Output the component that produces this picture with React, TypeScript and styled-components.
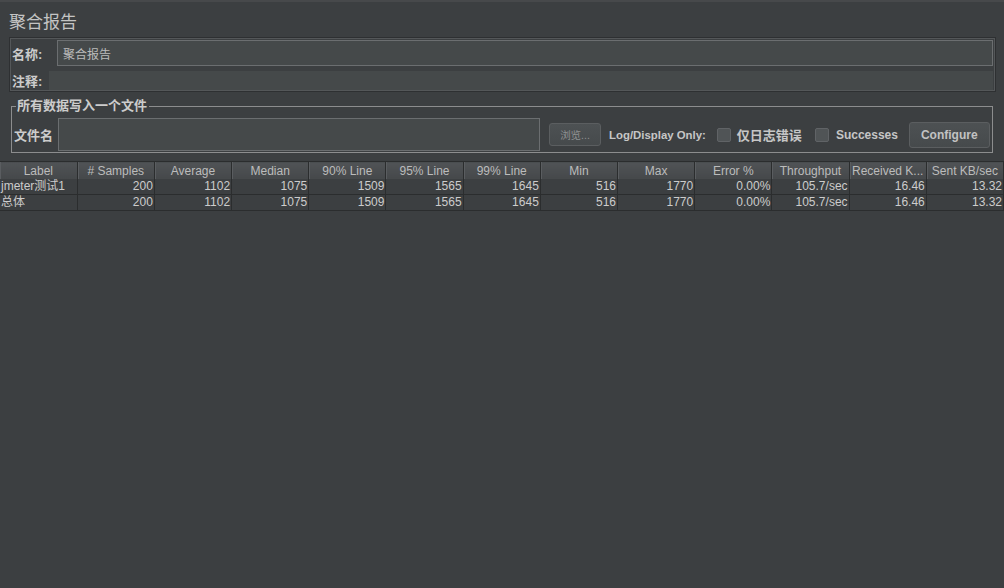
import styled, { createGlobalStyle } from 'styled-components';

const GlobalStyle = createGlobalStyle`
  html, body {
    margin: 0;
    padding: 0;
    background: #3c3f41;
  }
  body {
    font-family: "Liberation Sans", "Noto Sans CJK SC", sans-serif;
    color: #bbbbbb;
  }
`;

const Page = styled.div`
  width: 1004px;
  height: 588px;
  overflow: hidden;
  box-sizing: border-box;
  border-top: 2px solid #47494b;
  background: #3c3f41;
  display: flex;
  flex-direction: column;
`;

const Title = styled.div`
  padding: 10px 0 0 9px;
  height: 25px;
  font-size: 17px;
  line-height: 22px;
  color: #c4c4c4;
`;

const NamePanel = styled.div`
  margin: 0 8px 0 9px;
  border: 1px solid #2e3032;
  box-shadow: inset 0 0 0 1px #545759;
  padding: 2px 2px 1px 1px;
  display: flex;
  flex-direction: column;
  gap: 5px;
`;

const FieldRow = styled.div`
  display: flex;
  align-items: center;
`;

const BoldLabel = styled.span<{ $w?: number }>`
  width: ${({ $w }) => ($w ? `${$w}px` : 'auto')};
  flex: none;
  font-size: 13px;
  font-weight: bold;
  color: #cccccc;
  padding-left: 1px;
`;

const TextField = styled.div<{ $h: number; $border?: boolean }>`
  flex: 1;
  height: ${({ $h }) => $h}px;
  box-sizing: border-box;
  background: #45494a;
  border: ${({ $border }) => ($border ? '1px solid #6b6e70' : 'none')};
  font-size: 12px;
  color: #bbbbbb;
  display: flex;
  align-items: center;
  padding-left: 5px;
`;

const FileSet = styled.fieldset`
  margin: 7px 11px 0 11px;
  padding: 0 0 1px 1px;
  border: 1px solid #8c8d8e;
  border-radius: 0;
`;

const Legend = styled.legend`
  margin-left: 3px;
  padding: 0 2px 0 1px;
  font-size: 13px;
  font-weight: bold;
  color: #cccccc;
  line-height: 14px;
`;

const FileRow = styled.div`
  display: flex;
  align-items: center;
  padding-top: 5px;
`;

const FileField = styled(TextField)`
  flex: none;
  width: 482px;
  margin-left: 5px;
`;

const Button = styled.button<{ $dim?: boolean }>`
  box-sizing: border-box;
  height: ${({ $dim }) => ($dim ? 23 : 26)}px;
  width: ${({ $dim }) => ($dim ? '52px' : 'auto')};
  padding: 0 ${({ $dim }) => ($dim ? 0 : 11)}px;
  background: linear-gradient(#4d5153, #464a4c);
  border: 1px solid #5b5e60;
  border-radius: 3px;
  font-family: "Liberation Sans", "Noto Sans CJK SC", sans-serif;
  font-size: ${({ $dim }) => ($dim ? 10.5 : 12)}px;
  font-weight: ${({ $dim }) => ($dim ? 'normal' : 'bold')};
  color: ${({ $dim }) => ($dim ? '#8f9192' : '#c2c2c2')};
`;

const OptionText = styled.span<{ $cjk?: boolean; $small?: boolean }>`
  font-size: ${({ $cjk, $small }) => ($cjk ? 13 : $small ? 11.4 : 12)}px;
  font-weight: bold;
  color: #c6c6c6;
`;

const Check = styled.span`
  width: 14px;
  height: 14px;
  box-sizing: border-box;
  background: #505456;
  border: 1px solid #606366;
  border-radius: 2px;
  flex: none;
`;

const Options = styled.div`
  display: flex;
  align-items: center;
  margin-left: 8px;
`;

const Table = styled.table`
  margin-top: 8px;
  width: 1004px;
  border-collapse: collapse;
  table-layout: fixed;
  border-top: 1px solid #2b2d2e;
  font-size: 12px;
`;

const HeadCell = styled.th`
  height: 17px;
  padding: 0;
  font-weight: normal;
  color: #bcbcbc;
  text-align: center;
  background: linear-gradient(#505356, #45484a);
  border-right: 1px solid #2b2d2e;
  box-shadow: inset 1px 0 0 #5a5d60;
  white-space: nowrap;
  overflow: hidden;
  text-overflow: ellipsis;
`;

const Cell = styled.td<{ $left?: boolean }>`
  height: 15px;
  padding: 0 1px 0 1px;
  color: #cccccc;
  text-align: ${({ $left }) => ($left ? 'left' : 'right')};
  border-right: 1px solid #2b2d2e;
  border-bottom: 1px solid #2b2d2e;
  white-space: nowrap;
  overflow: hidden;
  line-height: 15px;
`;

const headers = [
  'Label', '# Samples', 'Average', 'Median', '90% Line', '95% Line', '99% Line',
  'Min', 'Max', 'Error %', 'Throughput', 'Received K...', 'Sent KB/sec',
];

const stats = ['200', '1102', '1075', '1509', '1565', '1645', '516', '1770', '0.00%', '105.7/sec', '16.46', '13.32'];
const rows = [['jmeter测试1', ...stats], ['总体', ...stats]];

const App = () => {
  return (
    <>
      <GlobalStyle />
      <Page>
        <Title>聚合报告</Title>
        <NamePanel>
          <FieldRow>
            <BoldLabel $w={45}>名称:</BoldLabel>
            <TextField $h={26} $border>聚合报告</TextField>
          </FieldRow>
          <FieldRow>
            <BoldLabel $w={37}>注释:</BoldLabel>
            <TextField $h={19} />
          </FieldRow>
        </NamePanel>
        <FileSet>
          <Legend>所有数据写入一个文件</Legend>
          <FileRow>
            <BoldLabel>文件名</BoldLabel>
            <FileField $h={33} $border />
            <Button $dim style={{ marginLeft: 9 }}>浏览...</Button>
            <Options>
              <OptionText $small>Log/Display Only:</OptionText>
              <Check style={{ marginLeft: 11 }} />
              <OptionText $cjk style={{ marginLeft: 6 }}>仅日志错误</OptionText>
              <Check style={{ marginLeft: 13 }} />
              <OptionText style={{ marginLeft: 7 }}>Successes</OptionText>
              <Button style={{ marginLeft: 11 }}>Configure</Button>
            </Options>
          </FileRow>
        </FileSet>
        <Table>
          <thead>
            <tr>
              {headers.map((h) => (
                <HeadCell key={h}>{h}</HeadCell>
              ))}
            </tr>
          </thead>
          <tbody>
            {rows.map((r) => (
              <tr key={r[0]}>
                {r.map((v, i) => (
                  <Cell key={i} $left={i === 0}>{v}</Cell>
                ))}
              </tr>
            ))}
          </tbody>
        </Table>
      </Page>
    </>
  );
};

export default App;
